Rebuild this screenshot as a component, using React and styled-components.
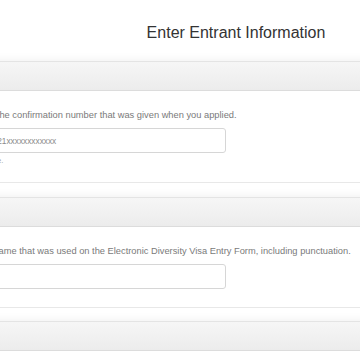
import styled, { createGlobalStyle } from "styled-components";

const GlobalStyle = createGlobalStyle`
    html, body {
        margin: 0;
        padding: 0;
        background: #ffffff;
        overflow: hidden;
        font-family: "Liberation Sans", Arial, sans-serif;
    }
`;

const Page = styled.div`
    width: 528px;
    margin-left: -28px;
`;

const Title = styled.h1`
    margin: 0;
    padding-top: 22px;
    font-size: 16px;
    line-height: 21px;
    font-weight: normal;
    color: #333333;
    text-align: center;
`;

const Section = styled.section`
    margin-top: ${(p) => p.$gap}px;
    border-bottom: 1px solid #e8e8e8;
`;

const Header = styled.div`
    height: 28px;
    background: linear-gradient(#f6f6f6, #ececec);
    border-top: 1px solid #e4e4e4;
    border-bottom: 1px solid #dcdcdc;
    box-shadow: 0 -7px 9px -5px rgba(0, 0, 0, 0.05);
`;

const Body = styled.div`
    padding: 18px 0 ${(p) => p.$bottom}px;
    display: flex;
    flex-direction: column;
`;

const Label = styled.div`
    font-size: 9.3px;
    line-height: 12px;
    color: #7a7a7a;
    white-space: nowrap;
`;

const Field = styled.input`
    box-sizing: border-box;
    width: 245px;
    height: 25px;
    margin: 7px 0 0 9px;
    padding: 0 6px;
    border: 1px solid #d6d6d6;
    border-radius: 3px;
    font-family: "Liberation Sans", Arial, sans-serif;
    font-size: 8.3px;
    color: #8a8a8a;
    outline: none;
`;

const Hint = styled.div`
    margin-top: 4px;
    font-size: 7.5px;
    line-height: 8px;
    color: #9a9a9a;
`;

const fields = [
    {
        id: 1,
        label: "Enter the confirmation number that was given when you applied.",
        value: "2021xxxxxxxxxxxx",
        hint: "Example.",
        gap: 18,
        bottom: 17
    },
    {
        id: 2,
        label: "Your name that was used on the Electronic Diversity Visa Entry Form, including punctuation.",
        value: "",
        gap: 14,
        bottom: 18
    }
];

export default function App() {
    return (
        <>
            <GlobalStyle/>
            <Page>
                <Title>Enter Entrant Information</Title>
                {fields.map((item) => (
                    <Section key={item.id} $gap={item.gap}>
                        <Header/>
                        <Body $bottom={item.bottom}>
                            <Label>{item.label}</Label>
                            <Field defaultValue={item.value} readOnly/>
                            {item.hint && <Hint>{item.hint}</Hint>}
                        </Body>
                    </Section>
                ))}
                <Section $gap={13}>
                    <Header/>
                    <Body $bottom={18}/>
                </Section>
            </Page>
        </>
    );
}
